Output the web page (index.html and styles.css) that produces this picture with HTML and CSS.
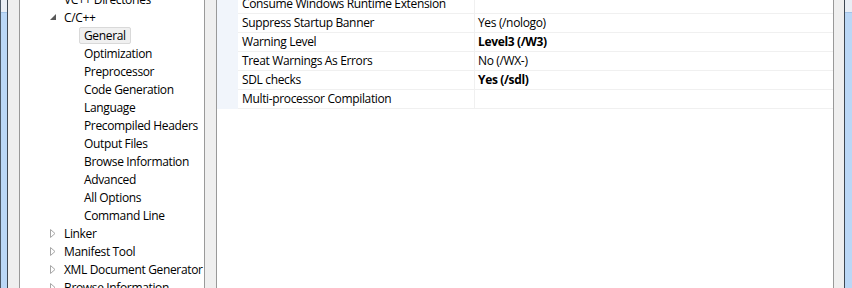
FILE: index.html
```html
<!DOCTYPE html>
<html lang="en">
<head>
    <meta charset="UTF-8">
    <title>Property Pages</title>
    <link rel="stylesheet" href="styles.css">
</head>
<body>
<div id="frame">
    <div class="strip strip-left"><div class="thumb"></div></div>
    <div class="band"></div>

    <div id="tree">
        <ul>
            <li class="l1"><span class="exp"></span><span class="lbl">VC++ Directories</span></li>
            <li class="l1"><span class="exp"><svg width="6" height="6"><path d="M6 0 L6 6 L0 6 Z" fill="#595959"/></svg></span><span class="lbl">C/C++</span></li>
            <li class="l2"><span class="lbl sel">General</span></li>
            <li class="l2"><span class="lbl">Optimization</span></li>
            <li class="l2"><span class="lbl">Preprocessor</span></li>
            <li class="l2"><span class="lbl">Code Generation</span></li>
            <li class="l2"><span class="lbl">Language</span></li>
            <li class="l2"><span class="lbl">Precompiled Headers</span></li>
            <li class="l2"><span class="lbl">Output Files</span></li>
            <li class="l2"><span class="lbl">Browse Information</span></li>
            <li class="l2"><span class="lbl">Advanced</span></li>
            <li class="l2"><span class="lbl">All Options</span></li>
            <li class="l2"><span class="lbl">Command Line</span></li>
            <li class="l1"><span class="exp"><svg width="6" height="9"><path d="M0.5 0.5 L5 4.5 L0.5 8.5 Z" fill="none" stroke="#a6a6a6"/></svg></span><span class="lbl">Linker</span></li>
            <li class="l1"><span class="exp"><svg width="6" height="9"><path d="M0.5 0.5 L5 4.5 L0.5 8.5 Z" fill="none" stroke="#a6a6a6"/></svg></span><span class="lbl">Manifest Tool</span></li>
            <li class="l1"><span class="exp"><svg width="6" height="9"><path d="M0.5 0.5 L5 4.5 L0.5 8.5 Z" fill="none" stroke="#a6a6a6"/></svg></span><span class="lbl">XML Document Generator</span></li>
            <li class="l1"><span class="exp"><svg width="6" height="9"><path d="M0.5 0.5 L5 4.5 L0.5 8.5 Z" fill="none" stroke="#a6a6a6"/></svg></span><span class="lbl">Browse Information</span></li>
        </ul>
    </div>

    <div class="band"></div>

    <div id="grid">
        <div class="rows">
            <div class="row"><div class="name">Consume Windows Runtime Extension</div><div class="val"></div></div>
            <div class="row"><div class="name">Suppress Startup Banner</div><div class="val">Yes (/nologo)</div></div>
            <div class="row"><div class="name">Warning Level</div><div class="val bold">Level3 (/W3)</div></div>
            <div class="row"><div class="name">Treat Warnings As Errors</div><div class="val">No (/WX-)</div></div>
            <div class="row"><div class="name">SDL checks</div><div class="val bold">Yes (/sdl)</div></div>
            <div class="row"><div class="name">Multi-processor Compilation</div><div class="val"></div></div>
        </div>
    </div>

    <div class="band band-right"></div>
    <div class="strip strip-right"><div class="thumb"></div></div>
</div>
</body>
</html>
```

FILE: styles.css
```css
*{
    margin: 0px;
    padding: 0px;
    box-sizing: border-box;
}
html,body{
    width: 852px;
    height: 288px;
    overflow: hidden;
    background: #fff;
}
body{
    font-family: "Segoe UI", "Open Sans", "Noto Sans", sans-serif;
    font-size: 12px;
    letter-spacing: -0.35px;
    color: #000;
}
ul{
    list-style: none;
}
#frame{
    display: flex;
    height: 288px;
}
/* window edges */
.strip{
    flex-shrink: 0;
    background: #e9eef5;
    padding-top: 12px;
}
.strip .thumb{
    height: 100%;
    background: #bad7f6;
    border-top: 1px solid #a3c4e8;
}
.strip-left{
    width: 8px;
    border-left: 1px solid #4b5866;
    border-right: 1px solid #3d4752;
}
.strip-right{
    width: 7px;
}
.band{
    flex-shrink: 0;
    width: 12px;
    background: #efefef;
    border-right: 1px solid #999;
}
.band-right{
    width: 11px;
    border-right: 1px solid #3d4752;
}
/* tree */
#tree{
    flex-shrink: 0;
    width: 185px;
    border-right: 1px solid #9a9a9a;
    overflow: hidden;
}
#tree ul{
    margin-top: -10px;
}
#tree li{
    height: 18px;
    display: flex;
    align-items: center;
    white-space: nowrap;
}
#tree li.l1{
    padding-left: 30px;
}
#tree li.l2{
    padding-left: 59px;
}
#tree .exp{
    flex-shrink: 0;
    width: 14px;
    height: 18px;
    display: flex;
    align-items: center;
}
#tree .lbl{
    padding: 0 4px;
    border: 1px solid transparent;
    line-height: 15px;
    border-radius: 2px;
}
#tree li.l1 .lbl{
    padding-left: 0;
    border: 0;
}
#tree .lbl.sel{
    background: #f0f0f0;
    border-color: #d9d9d9;
}
/* property grid */
#grid{
    flex-shrink: 0;
    width: 617px;
    border-right: 1px solid #999;
    overflow: hidden;
}
#grid .rows{
    margin-top: -5px;
    border-left: 21px solid #f1f5fb;
}
#grid .row{
    display: flex;
    height: 19px;
    border-bottom: 1px solid #f0f0f0;
    line-height: 18px;
    white-space: nowrap;
}
#grid .name{
    width: 237px;
    padding-left: 4px;
    border-right: 1px solid #f0f0f0;
}
#grid .val{
    flex: 1;
    padding-left: 3px;
}
#grid .bold{
    font-weight: bold;
}
```
